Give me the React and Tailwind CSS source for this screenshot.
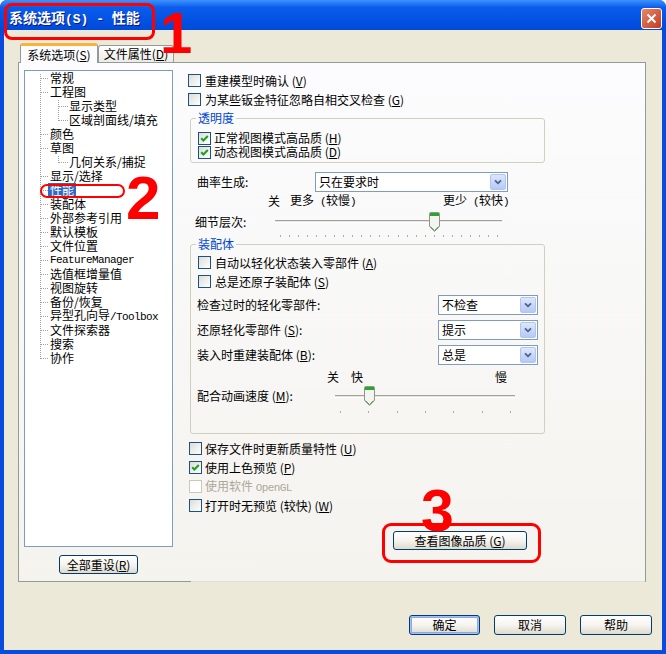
import React from "react";

const U = ({ c }) => <span className="underline underline-offset-[1px]">{c}</span>;
const M = ({ c }) => (
  <span className="font-['Liberation_Mono',monospace] text-[11px] tracking-[-0.6px] whitespace-pre">{c}</span>
);

function Cb({ checked = false, disabled = false }) {
  return (
    <span
      className={`relative block w-[13px] h-[13px] shrink-0 border ${
        disabled ? "border-[#cac8bb] bg-white" : "border-[#1c5180] bg-linear-to-br from-[#dcdcd7] to-white"
      }`}
    >
      {checked && (
        <svg className="absolute left-0 top-0" width="11" height="11" viewBox="0 0 11 11">
          <path d="M2.2 5.2 L4.4 7.4 L8.8 3" stroke="#21a121" strokeWidth="2.1" fill="none" />
        </svg>
      )}
    </span>
  );
}

function CheckRow({ checked, disabled, children, h = "h-[19px]", gap = "gap-[4px]", className = "" }) {
  return (
    <div className={`flex items-center ${h} ${gap} ${disabled ? "text-[#aca899]" : ""} ${className}`}>
      <Cb checked={checked} disabled={disabled} />
      <span className="leading-[14px] whitespace-pre">{children}</span>
    </div>
  );
}

function Combo({ className = "", text }) {
  return (
    <div className={`flex items-center h-[20px] border border-[#7f9db9] bg-white ${className}`}>
      <span className="flex-1 pl-[3px] leading-[14px]">{text}</span>
      <span className="w-[16px] h-[16px] mr-[1px] rounded-[2px] border border-[#b1c5f4] bg-linear-to-b from-[#dde7fd] to-[#b5c9f7] flex items-center justify-center">
        <svg width="8" height="6" viewBox="0 0 8 6">
          <path d="M1 1.3 L4 4.3 L7 1.3" stroke="#4d6185" strokeWidth="1.8" fill="none" />
        </svg>
      </span>
    </div>
  );
}

function Thumb() {
  return (
    <svg width="11" height="20" viewBox="0 0 11 20">
      <path
        d="M0.5 1.5 Q0.5 0.5 1.5 0.5 H9.5 Q10.5 0.5 10.5 1.5 V14.5 L5.5 19.5 L0.5 14.5 Z"
        fill="#f4f4f0"
        stroke="#8f978a"
      />
      <path d="M1 1 H10 V4 H1 Z" fill="#2ba52b" />
      <path d="M1.5 14.5 L5.5 18.5 L9.5 14.5" stroke="#5fae5f" fill="none" />
    </svg>
  );
}

function Slider({ className = "", thumbLeft, thumbTop, trackTop, tickTop, ticks }) {
  return (
    <div className={`relative ${className}`}>
      <div
        className="absolute left-0 right-0 h-[3px] border-t border-[#a2a19c] border-b border-b-white bg-[#e6e5df]"
        style={{ top: trackTop }}
      />
      {ticks.map((x, i) => (
        <div key={i} className="absolute w-px h-[2px] bg-[#b0afa5]" style={{ left: x, top: tickTop }} />
      ))}
      <div className="absolute" style={{ left: thumbLeft, top: thumbTop }}>
        <Thumb />
      </div>
    </div>
  );
}

function XpBtn({ className = "", children, def = false }) {
  return (
    <div
      className={`flex items-center justify-center rounded-[3px] border border-[#003c74] bg-linear-to-b from-white via-[#f5f4ef] to-[#dedbcd] leading-[14px] ${
        def ? "shadow-[inset_0_0_0_1px_#a9bff0,inset_0_0_0_2px_#8aa8ec]" : ""
      } ${className}`}
    >
      {children}
    </div>
  );
}

const tree = [
  ["常规", 1],
  ["工程图", 1],
  ["显示类型", 2],
  ["区域剖面线/填充", 2],
  ["颜色", 1],
  ["草图", 1],
  ["几何关系/捕捉", 2],
  ["显示/选择", 1],
  ["性能", 1, "sel"],
  ["装配体", 1],
  ["外部参考引用", 1],
  ["默认模板", 1],
  ["文件位置", 1],
  ["FeatureManager", 1, "mono"],
  ["选值框增量值", 1],
  ["视图旋转", 1],
  ["备份/恢复", 1],
  ["异型孔向导/Toolbox", 1, "tool"],
  ["文件探索器", 1],
  ["搜索", 1],
  ["协作", 1],
];

const ticks1 = Array.from({ length: 25 }, (_, i) => Math.round(5 + i * 9.04));
const ticks2 = Array.from({ length: 7 }, (_, i) => Math.round(5 + i * 28.33));

function TreeLines() {
  const c = (k) => 7 + 14 * k + 0.5;
  const lines = [];
  lines.push(<line key="v" x1="15.5" y1="3" x2="15.5" y2={c(20)} />);
  tree.forEach(([, lvl], k) => {
    if (lvl === 1) lines.push(<line key={"h" + k} x1="16" y1={c(k)} x2="24" y2={c(k)} />);
    else lines.push(<line key={"h" + k} x1="34" y1={c(k)} x2="43" y2={c(k)} />);
  });
  lines.push(<line key="v2" x1="33.5" y1={c(1) + 7} x2="33.5" y2={c(3)} />);
  lines.push(<line key="v3" x1="33.5" y1={c(5) + 7} x2="33.5" y2={c(6)} />);
  return (
    <svg className="absolute left-0 top-0" width="147" height="300" stroke="#a0a0a0" strokeDasharray="1 1" shapeRendering="crispEdges">
      {lines}
    </svg>
  );
}

export default function App() {
  return (
    <div className="relative w-[666px] h-[654px] bg-white font-['Noto_Sans_CJK_SC','Noto_Sans',sans-serif] text-[12px] text-black select-none">
      <div className="w-full h-full flex flex-col rounded-t-[7px] bg-[#0b4bdc] overflow-hidden">
        {/* Title bar */}
        <div className="h-[30px] shrink-0 flex items-center pt-[6px] pl-[9px] pr-[4px] bg-linear-to-b from-[#3d92fc] via-[#0a5ced] via-25% to-[#004ada]">
          <span className="flex-1 flex items-baseline text-white font-bold text-[14px] leading-[16px] whitespace-pre [text-shadow:1px_1px_#0a1883]">
            <span>系统选项</span>
            <span className="font-['Liberation_Mono',monospace] text-[13px]">(S) - </span>
            <span>性能</span>
          </span>
          <div className="w-[21px] h-[21px] rounded-[3px] border border-white bg-linear-to-br from-[#e8866a] to-[#c1391f] flex items-center justify-center">
            <svg width="11" height="11" viewBox="0 0 11 11">
              <path d="M1.5 1.5 L9.5 9.5 M9.5 1.5 L1.5 9.5" stroke="white" strokeWidth="2" />
            </svg>
          </div>
        </div>

        {/* Body */}
        <div className="flex-1 mx-[4px] mb-[4px] bg-[#ece9d8] flex flex-col">
          {/* Tabs */}
          <div className="flex items-end h-[19px] mt-[13px] ml-[16px]">
            <div className="relative z-10 w-[78px] h-[20px] mb-[-1px] border-l border-r border-[#919b9c] border-t-[3px] border-t-[#f7b43a] rounded-t-[3px] bg-[#fcfcfe] flex items-center justify-center leading-[14px]">
              系统选项(<U c="S" />)
            </div>
            <div className="w-[76px] h-[17px] border-t border-l border-r border-[#919b9c] rounded-t-[3px] bg-linear-to-b from-white to-[#ecebe5] flex items-center justify-center leading-[14px]">
              文件属性(<U c="D" />)
            </div>
          </div>

          {/* Panel */}
          <div className="ml-[14px] w-[628px] h-[520px] border-t border-l border-r border-[#919b9c] bg-linear-to-b from-[#fcfcfe] to-[#f4f3ee] flex flex-col">
            <div className="flex flex-1">
              {/* Tree column */}
              <div className="ml-[5px] w-[149px] flex flex-col pt-[7px]">
                <div className="relative h-[477px] border border-[#7f9db9] bg-white">
                  <TreeLines />
                  <div className="relative flex flex-col">
                    {tree.map(([t, lvl, kind], k) => (
                      <div
                        key={k}
                        className={`h-[14px] flex items-center leading-[14px] whitespace-pre ${
                          lvl === 1 ? (kind === "sel" ? "pl-[23px]" : "pl-[25px]") : "pl-[44px]"
                        }`}
                      >
                        {kind === "sel" ? (
                          <span className="bg-[#316ac5] text-white px-[2px]">{t}</span>
                        ) : kind === "mono" ? (
                          <M c={t} />
                        ) : kind === "tool" ? (
                          <span>
                            异型孔向导<M c="/Toolbox" />
                          </span>
                        ) : (
                          t
                        )}
                      </div>
                    ))}
                  </div>
                </div>
                <XpBtn className="mt-[8px] ml-[35px] w-[79px] h-[19px]">
                  全部重设(<U c="R" />)
                </XpBtn>
              </div>

              {/* Right column */}
              <div className="flex-1 flex flex-col pt-[8px] ml-[15px]">
                <CheckRow>
                  重建模型时确认 (<U c="V" />)
                </CheckRow>
                <CheckRow>
                  为某些钣金特征忽略自相交叉检查 (<U c="G" />)
                </CheckRow>

                <fieldset className="mt-[2px] ml-[2px] w-[355px] border border-[#d0d0bf] rounded-[3px] pl-[7px] pb-[3px]">
                  <legend className="ml-[-2px] px-[2px] text-[#0046d5] leading-[14px]">透明度</legend>
                  <CheckRow checked h="h-[14px]" gap="gap-[3px]" className="mt-[6px]">
                    正常视图模式高品质 (<U c="H" />)
                  </CheckRow>
                  <CheckRow checked h="h-[14px]" gap="gap-[3px]">
                    动态视图模式高品质 (<U c="D" />)
                  </CheckRow>
                </fieldset>

                <div className="flex items-center h-[20px] mt-[9px] pl-[9px]">
                  <span className="w-[118px] leading-[14px]">曲率生成:</span>
                  <Combo className="w-[193px]" text="只在要求时" />
                </div>

                <div className="flex items-center h-[14px] mt-[2px] pl-[80px] leading-[14px] whitespace-pre">
                  <span>关</span>
                  <span className="ml-[10px] w-[153px]">
                    更多<M c=" (" />较慢<M c=")" />
                  </span>
                  <span>
                    更少<M c=" (" />较快<M c=")" />
                  </span>
                </div>

                <div className="flex h-[29px] pl-[7px]">
                  <span className="w-[80px] mt-[7px] leading-[14px]">细节层次:</span>
                  <Slider className="w-[227px] h-[29px]" thumbLeft={154} thumbTop={4} trackTop={12} tickTop={27} ticks={ticks1} />
                </div>

                <fieldset className="ml-[2px] w-[355px] border border-[#d0d0bf] rounded-[3px] pl-[7px] pr-[6px] pb-[17px]">
                  <legend className="ml-[-2px] px-[2px] text-[#0046d5] leading-[14px]">装配体</legend>
                  <CheckRow className="mt-[2px]">
                    自动以轻化状态装入零部件 (<U c="A" />)
                  </CheckRow>
                  <CheckRow>
                    总是还原子装配体 (<U c="S" />)
                  </CheckRow>
                  <div className="flex items-center h-[20px] mt-[4px] ml-[-1px]">
                    <span className="flex-1 leading-[14px]">检查过时的轻化零部件:</span>
                    <Combo className="w-[100px]" text="不检查" />
                  </div>
                  <div className="flex items-center h-[20px] mt-[5px] ml-[-1px]">
                    <span className="flex-1 leading-[14px]">
                      还原轻化零部件 (<U c="S" />):
                    </span>
                    <Combo className="w-[100px]" text="提示" />
                  </div>
                  <div className="flex items-center h-[20px] mt-[5px] ml-[-1px]">
                    <span className="flex-1 leading-[14px]">
                      装入时重建装配体 (<U c="B" />):
                    </span>
                    <Combo className="w-[100px]" text="总是" />
                  </div>
                  <div className="flex items-center h-[14px] mt-[5px] leading-[14px]">
                    <span className="ml-[129px]">关</span>
                    <span className="ml-[12px]">快</span>
                    <span className="ml-[132px]">慢</span>
                  </div>
                  <div className="flex h-[32px] ml-[-1px]">
                    <span className="w-[138px] mt-[5px] leading-[14px]">
                      配合动画速度 (<U c="M" />):
                    </span>
                    <Slider className="w-[180px] h-[32px]" thumbLeft={29} thumbTop={2} trackTop={11} tickTop={27} ticks={ticks2} />
                  </div>
                </fieldset>

                <div className="flex flex-col mt-[5px] ml-[1px]">
                  <CheckRow gap="gap-[3px]">
                    保存文件时更新质量特性 (<U c="U" />)
                  </CheckRow>
                  <CheckRow checked gap="gap-[3px]">
                    使用上色预览 (<U c="P" />)
                  </CheckRow>
                  <CheckRow disabled gap="gap-[3px]">
                    使用软件 <M c="OpenGL" />
                  </CheckRow>
                  <CheckRow gap="gap-[3px]">
                    打开时无预览 (较快) (<U c="W" />)
                  </CheckRow>
                </div>

                <XpBtn className="mt-[16px] ml-[205px] w-[134px] h-[19px]">
                  查看图像品质 (<U c="G" />)
                </XpBtn>
              </div>
            </div>
            <div className="flex h-px">
              <div className="w-[172px] bg-[#919b9c]" />
              <div className="flex-1 bg-[#e2e0d5]" />
            </div>
          </div>

          {/* Bottom buttons */}
          <div className="flex justify-end gap-[14px] mr-[10px] mt-[33px]">
            <XpBtn def className="w-[71px] h-[20px]">确定</XpBtn>
            <XpBtn className="w-[72px] h-[20px]">取消</XpBtn>
            <XpBtn className="w-[72px] h-[20px]">帮助</XpBtn>
          </div>
        </div>
      </div>

      {/* Annotations */}
      <div className="absolute left-[4px] top-[3px] w-[151px] h-[37px] border-[3px] border-[#ff0000] rounded-[8px]" />
      <div className="absolute left-[160px] top-[4px] text-[#ff0000] font-['Liberation_Sans',sans-serif] font-bold text-[58px] leading-none">1</div>
      <div className="absolute left-[40px] top-[184px] w-[85px] h-[14px] border-2 border-[#ff0000] rounded-full" />
      <div className="absolute left-[126px] top-[167px] text-[#ff0000] font-['Liberation_Sans',sans-serif] font-bold text-[62px] leading-none">2</div>
      <div className="absolute left-[382px] top-[523px] w-[159px] h-[40px] border-[3px] border-[#ff0000] rounded-[9px]" />
      <div className="absolute left-[421px] top-[482px] text-[#ff0000] font-['Liberation_Sans',sans-serif] font-bold text-[59px] leading-none">3</div>
    </div>
  );
}
